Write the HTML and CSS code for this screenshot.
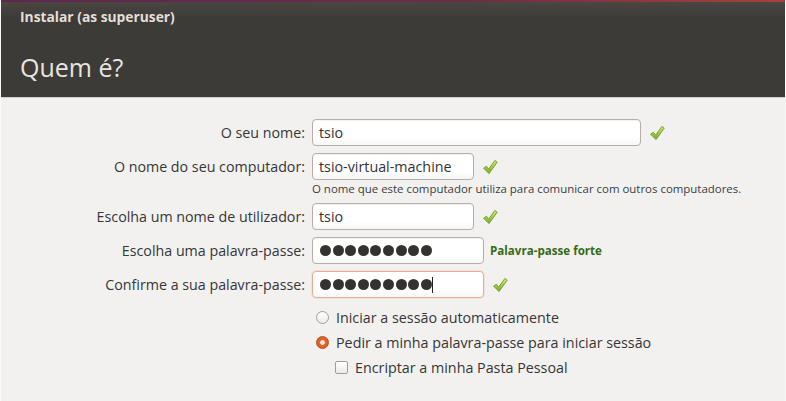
FILE: index.html
```html
<!DOCTYPE html>
<html lang="pt">
<head>
<meta charset="utf-8">
<title>Instalar (as superuser)</title>
<link rel="stylesheet" href="styles.css">
</head>
<body>
<div class="window">
  <div class="topline"></div>
  <header class="header">
    <div class="wintitle">Instalar (as superuser)</div>
    <h1 class="page-title">Quem é?</h1>
  </header>
  <main class="form">
    <div class="row">
      <label class="label">O seu nome:</label>
      <div class="field field-wide"><span class="value">tsio</span></div>
      <svg class="check" viewBox="0 0 16 16"><use href="#chk"/></svg>
    </div>
    <div class="row">
      <label class="label">O nome do seu computador:</label>
      <div class="field field-mid"><span class="value">tsio-virtual-machine</span></div>
      <svg class="check" viewBox="0 0 16 16"><use href="#chk"/></svg>
    </div>
    <div class="hint">O nome que este computador utiliza para comunicar com outros computadores.</div>
    <div class="row row-after-hint">
      <label class="label">Escolha um nome de utilizador:</label>
      <div class="field field-mid"><span class="value">tsio</span></div>
      <svg class="check" viewBox="0 0 16 16"><use href="#chk"/></svg>
    </div>
    <div class="row">
      <label class="label">Escolha uma palavra-passe:</label>
      <div class="field field-pass">
        <span class="dots"><i></i><i></i><i></i><i></i><i></i><i></i><i></i><i></i><i></i></span>
      </div>
      <span class="strength">Palavra-passe forte</span>
    </div>
    <div class="row">
      <label class="label">Confirme a sua palavra-passe:</label>
      <div class="field field-pass focused">
        <span class="dots"><i></i><i></i><i></i><i></i><i></i><i></i><i></i><i></i><i></i></span><span class="caret"></span>
      </div>
      <svg class="check" viewBox="0 0 16 16"><use href="#chk"/></svg>
    </div>
    <div class="options">
      <div class="option"><span class="radio"></span><span>Iniciar a sessão automaticamente</span></div>
      <div class="option"><span class="radio on"></span><span>Pedir a minha palavra-passe para iniciar sessão</span></div>
      <div class="option sub"><span class="checkbox"></span><span>Encriptar a minha Pasta Pessoal</span></div>
    </div>
  </main>
</div>
<svg class="defs" width="0" height="0" aria-hidden="true">
  <defs>
    <linearGradient id="g" x1="0" y1="0" x2="0" y2="1">
      <stop offset="0" stop-color="#d4ea78"/>
      <stop offset="1" stop-color="#79ab22"/>
    </linearGradient>
    <symbol id="chk" viewBox="0 0 16 16">
      <path d="M1.6 9.2 L4.4 7.2 L6.6 10.2 L12.9 1.4 L15.2 3.2 L7.0 14.6 Z" fill="url(#g)" stroke="#6f9a22" stroke-width="0.9" stroke-linejoin="round"/>
    </symbol>
  </defs>
</svg>
</body>
</html>
```
FILE: styles.css
```css
html, body {
  margin: 0;
  padding: 0;
}
body {
  background: #f2f1f0;
  font-family: "Open Sans", "DejaVu Sans", sans-serif;
  color: #3c3c3c;
}
.window {
  width: 786px;
  height: 401px;
  box-sizing: border-box;
  border-left: 1px solid #fbfbfa;
  border-right: 1px solid #fbfbfa;
}
.topline {
  height: 2px;
  background: linear-gradient(90deg, #5e2750 0%, #6e2c47 60%, #a7413a 100%);
}
.header {
  height: 96px;
  background: linear-gradient(180deg, #4a4642 0px, #3d3b38 16px, #3c3b37 100%);
  border-bottom: 1px solid #cfcdca;
  box-sizing: border-box;
  padding-left: 19px;
}
.wintitle {
  color: #e3dfd8;
  font-weight: 700;
  font-size: 13.8px;
  padding-top: 5px;
  line-height: 19px;
}
.page-title {
  margin: 0;
  padding-top: 25px;
  color: #e8e5e0;
  font-weight: 400;
  font-size: 25px;
  line-height: 32px;
}
.form {
  padding-top: 21px;
}
.row {
  display: flex;
  align-items: center;
  height: 27px;
  margin-bottom: 7px;
}
.row-after-hint {
  margin-top: 7px;
}
.label {
  width: 311px;
  box-sizing: border-box;
  padding-right: 7px;
  text-align: right;
  font-size: 14.25px;
  color: #363636;
}
.field {
  height: 27px;
  box-sizing: border-box;
  border: 1px solid #b3b0ab;
  border-radius: 4px;
  background: linear-gradient(180deg, #ffffff 0%, #ffffff 70%, #f6f6f5 100%);
  box-shadow: inset 0 1px 1px rgba(0,0,0,0.06);
  display: flex;
  align-items: center;
  padding-left: 6px;
}
.field-wide { width: 329px; }
.field-mid { width: 162px; }
.field-pass { width: 172px; padding-left: 7px; }
.focused {
  border-color: #e9ad93;
  box-shadow: 0 0 0 1px rgba(240,180,150,0.25);
}
.value {
  font-size: 14.3px;
  color: #333;
}
.check {
  width: 16px;
  height: 16px;
  margin-left: 8px;
}
.hint {
  margin-left: 311px;
  margin-top: -5px;
  font-size: 11.45px;
  line-height: 14px;
  color: #3c3c3c;
}
.dots {
  display: flex;
  gap: 1.6px;
}
.dots i {
  display: block;
  width: 11px;
  height: 11px;
  border-radius: 50%;
  background: #333231;
}
.caret {
  display: block;
  width: 1px;
  height: 16px;
  background: #222;
}
.strength {
  margin-left: 6px;
  font-size: 11.6px;
  font-weight: 700;
  color: #356b16;
}
.options {
  padding-left: 315px;
}
.option {
  display: flex;
  align-items: center;
  height: 25px;
  font-size: 14.3px;
  color: #363636;
}
.option.sub {
  padding-left: 19px;
}
.radio {
  width: 13px;
  height: 13px;
  box-sizing: border-box;
  border-radius: 50%;
  border: 1px solid #a09d99;
  background: linear-gradient(180deg, #ffffff, #ecebea);
  margin-right: 7px;
  flex: none;
}
.radio.on {
  border-color: #b5501c;
  background: radial-gradient(circle, #fbe9df 0 2px, #e4672a 2.6px, #d65a1f 100%);
}
.checkbox {
  width: 13px;
  height: 13px;
  box-sizing: border-box;
  border-radius: 2px;
  border: 1px solid #a09d99;
  background: linear-gradient(180deg, #ffffff, #ecebea);
  margin-right: 7px;
  flex: none;
}
.defs {
  position: absolute;
  width: 0;
  height: 0;
}
```
